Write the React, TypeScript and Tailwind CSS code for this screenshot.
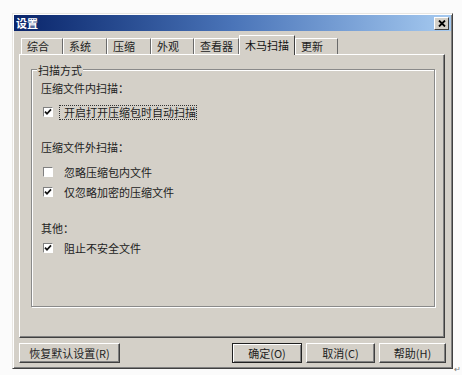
import React from "react";

// classic win2k-ish settings dialog, tab "木马扫描"

const FONT = '"Noto Sans CJK SC", "Liberation Sans", sans-serif';

const TABS = [
  { label: "综合", w: "w-[42px]" },
  { label: "系统", w: "w-[44px]" },
  { label: "压缩", w: "w-[44px]" },
  { label: "外观", w: "w-[43px]" },
  { label: "查看器", w: "w-[45px]" },
  { label: "木马扫描", w: "w-[56px]", active: true },
  { label: "更新", w: "w-[43px]" },
];

function Check({ on }: { on: boolean }) {
  return (
    <span className="flex h-[10px] w-[10px] shrink-0 items-center justify-center border-t border-l border-t-[#808080] border-l-[#808080] border-r border-b border-r-white border-b-white bg-white">
      {on && (
        <svg width="8" height="8" viewBox="0 0 8 8">
          <path d="M1 3.6 L3 5.8 L7 1.4" fill="none" stroke="#111" strokeWidth="1.7" />
        </svg>
      )}
    </span>
  );
}

function Btn({ label, w, primary }: { label: string; w: string; primary?: boolean }) {
  return (
    <button
      className={`${w} h-[20px] flex items-center justify-center bg-[#d4d0c8] text-[11px] text-[#222] leading-none ${
        primary
          ? "border border-[#202020] shadow-[inset_1px_1px_0_#fff,inset_-1px_-1px_0_#808080]"
          : "border-t border-l border-t-white border-l-white border-r border-b border-r-[#404040] border-b-[#404040] shadow-[inset_-1px_-1px_0_#808080]"
      }`}
    >
      {label}
    </button>
  );
}

export default function App() {
  return (
    <div className="min-h-[375px] w-[462px] bg-[#fbfbfb] pt-[13px] pl-[12px]" style={{ fontFamily: FONT }}>
      <div className="flex items-end">
        <div className="flex h-[356px] w-[441px] flex-col border-t border-l border-t-[#e8e6e2] border-l-[#e8e6e2] border-r border-b border-r-[#404040] border-b-[#404040] bg-[#d4d0c8] shadow-[inset_1px_1px_0_#fff,inset_-1px_-1px_0_#808080]">
          {/* title bar */}
          <div className="mx-[1px] mt-[1px] flex h-[16px] items-center justify-between bg-gradient-to-r from-[#0a246a] via-[#4a74b8] to-[#a6caf0] pl-[2px] pr-[2px]">
            <span className="text-[11px] font-bold leading-none text-white">设置</span>
            <span className="flex h-[13px] w-[15px] items-center justify-center border-t border-l border-t-white border-l-white border-r border-b border-r-[#404040] border-b-[#404040] bg-[#d4d0c8]">
              <svg width="8" height="7" viewBox="0 0 8 7">
                <path d="M1 0.5 L7 6.5 M7 0.5 L1 6.5" stroke="#000" strokeWidth="1.8" />
              </svg>
            </span>
          </div>

          {/* tabs */}
          <div className="mt-[4px] ml-[8px] flex h-[19px] items-end">
            {TABS.map((t) =>
              t.active ? (
                <div
                  key={t.label}
                  className={`${t.w} relative z-10 -mb-[1px] flex h-[20px] items-center border-t border-l border-t-white border-l-white border-r border-r-[#404040] bg-[#d4d0c8] pl-[5px] text-[11px] leading-none text-[#111]`}
                >
                  {t.label}
                </div>
              ) : (
                <div
                  key={t.label}
                  className={`${t.w} flex h-[16px] items-center border-t border-l border-t-white border-l-white border-r border-r-[#6a6a6a] pl-[5px] text-[11px] leading-none text-[#222]`}
                >
                  {t.label}
                </div>
              )
            )}
          </div>

          {/* tab panel */}
          <div className="ml-[6px] h-[284px] w-[426px] border-t border-l border-t-white border-l-white border-r border-b border-r-[#404040] border-b-[#404040] pt-[14px] pl-[11px] shadow-[inset_-1px_-1px_0_#808080]">
            <div className="relative h-[238px] w-[404px] border border-[#8a8a8a] pt-[10px] pl-[9px] shadow-[1px_1px_0_#fff,inset_1px_1px_0_#fff] text-[11px] text-[#222]">
              <span className="absolute -top-[8px] left-[5px] bg-[#d4d0c8] px-[1px] leading-[16px]">扫描方式</span>

              <div className="flex h-[16px] items-center leading-none">压缩文件内扫描：</div>

              <div className="mt-[8px] flex h-[16px] items-center pl-[2px] leading-none">
                <Check on />
                <span className="ml-[6px] flex h-[15px] w-[138px] items-center border border-dotted border-[#333] pl-[4px]">
                  开启打开压缩包时自动扫描
                </span>
              </div>

              <div className="mt-[19px] flex h-[16px] items-center leading-none">压缩文件外扫描：</div>

              <div className="mt-[9px] flex h-[16px] items-center pl-[2px] leading-none">
                <Check on={false} />
                <span className="ml-[11px]">忽略压缩包内文件</span>
              </div>

              <div className="mt-[4px] flex h-[16px] items-center pl-[2px] leading-none">
                <Check on />
                <span className="ml-[11px]">仅忽略加密的压缩文件</span>
              </div>

              <div className="mt-[20px] flex h-[16px] items-center leading-none">其他：</div>

              <div className="mt-[4px] flex h-[16px] items-center pl-[2px] leading-none">
                <Check on />
                <span className="ml-[11px]">阻止不安全文件</span>
              </div>
            </div>
          </div>

          {/* buttons */}
          <div className="mt-[5px] ml-[6px] flex items-center">
            <Btn label="恢复默认设置(R)" w="w-[101px]" />
            <div className="ml-[112px] flex gap-[4px]">
              <Btn label="确定(O)" w="w-[70px]" primary />
              <Btn label="取消(C)" w="w-[69px]" />
              <Btn label="帮助(H)" w="w-[67px]" />
            </div>
          </div>
        </div>
        <span className="ml-[1px] -mb-[4px] text-[8px] leading-none text-[#777]">↵</span>
      </div>
    </div>
  );
}
